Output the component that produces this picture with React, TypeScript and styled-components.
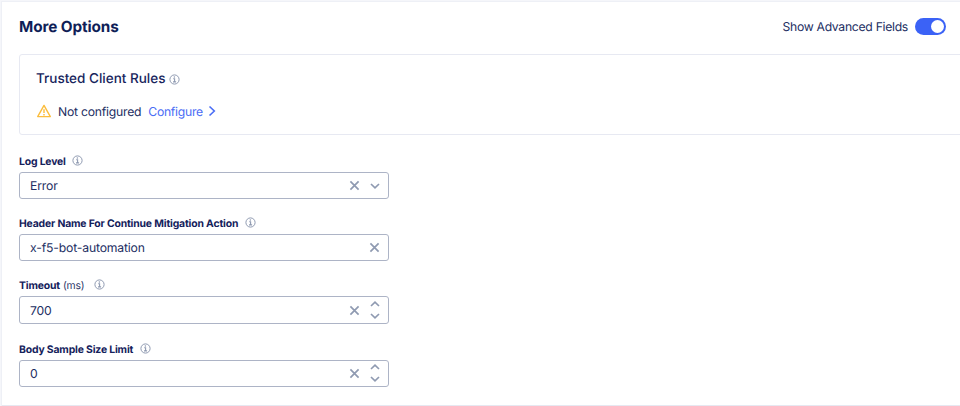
import React from "react";
import styled, { createGlobalStyle } from "styled-components";

const GlobalStyle = createGlobalStyle`
  *, *::before, *::after { box-sizing: border-box; }
  body { margin: 0; background: #f5f6fa; font-family: Inter, "Liberation Sans", sans-serif; color: #222e62; overflow: hidden; text-rendering: geometricPrecision; }
`;

const Page = styled.div`
  height: 406px;
  padding: 2px 0 0 2px;
  overflow: hidden;
`;

const Panel = styled.section`
  height: 404px;
  padding-left: 17px;
  background: #fff;
  border-bottom: 1px solid #e6e8f1;
  box-shadow: 0 0 0 1px #eef0f6;
`;

const Header = styled.header`
  display: flex;
  align-items: center;
  justify-content: space-between;
  height: 50px;
  padding-right: 14.5px;
`;

const Title = styled.h1`
  margin: 0;
  font-size: 15.3px;
  line-height: 20px;
  font-weight: 700;
  letter-spacing: -0.1px;
  color: #0f1e57;
`;

const ToggleLabel = styled.label`
  display: flex;
  align-items: center;
  gap: 7px;
  margin-bottom: 1px;
  font-size: 12.2px;
  letter-spacing: -0.29px;
  white-space: nowrap;
`;

const Switch = styled.button`
  display: flex;
  align-items: center;
  justify-content: flex-end;
  width: 30.5px;
  height: 17px;
  padding: 0 2px;
  border: 0;
  border-radius: 9px;
  background: #3b62f6;
`;

const Knob = styled.span`
  width: 13px;
  height: 13px;
  border-radius: 50%;
  background: #fff;
`;

const Card = styled.section`
  height: 81px;
  margin: 2px -4px 15px 0;
  padding: 14px 17px 0;
  border: 1px solid #e7e9f2;
  border-radius: 3px;
`;

const CardTitle = styled.h2`
  display: flex;
  align-items: center;
  gap: 4px;
  height: 20px;
  margin: 0 0 0 -1px;
  font-size: 13.5px;
  font-weight: 500;
  color: #17245c;
`;

const Status = styled.div`
  display: flex;
  align-items: center;
  height: 20px;
  margin-top: 12px;
  font-size: 12.2px;
  letter-spacing: -0.23px;
`;

const StatusText = styled.span`
  margin: 0 7px;
`;

const ConfigureLink = styled.a`
  display: flex;
  align-items: center;
  gap: 5px;
  letter-spacing: -0.27px;
  color: #4a6df5;
`;

const Fields = styled.div`
  width: 370px;
`;

const Field = styled.div<{ $gap: number }>`
  margin-bottom: ${(p) => p.$gap}px;
`;

const FieldLabel = styled.div`
  display: flex;
  align-items: center;
  height: 22px;
  padding-top: 1px;
  font-size: 10.4px;
  font-weight: 700;
  letter-spacing: -0.16px;
  color: #14215b;
`;

const Unit = styled.span`
  margin: 0 3px 0 3px;
  font-weight: 400;
  color: #2e3969;
`;

const LabelIcon = styled.span`
  display: flex;
  margin: 0 0 2px 6.5px;
`;

const InputBox = styled.div<{ $height: number }>`
  display: flex;
  align-items: center;
  height: ${(p) => p.$height}px;
  padding: 0 8px 0 10px;
  border: 1px solid #adb4c6;
  border-radius: 3px;
  font-size: 12.2px;
  letter-spacing: -0.16px;
`;

const Value = styled.span`
  flex: 1;
`;

const Controls = styled.div<{ $arrows: boolean }>`
  display: flex;
  align-items: center;
  gap: 9.5px;
  padding-right: ${(p) => (p.$arrows ? 0.5 : 0)}px;
`;

const Stepper = styled.div`
  display: flex;
  flex-direction: column;
  gap: 6px;
  margin-bottom: 1px;
`;

const Icon = styled.svg`
  display: block;
  flex: none;
  fill: none;
`;

const InfoIcon = () => (
  <Icon width="11" height="11" viewBox="0 0 11 11" stroke="#8f9ab1">
    <circle cx="5.5" cy="5.5" r="4.6" strokeWidth="1" />
    <path d="M4.2 4.8h1.4v3M4 7.9h3.1" strokeWidth="1.1" />
    <circle cx="5.4" cy="3.1" r="0.75" fill="#8f9ab1" stroke="none" />
  </Icon>
);

const WarningIcon = () => (
  <Icon width="14" height="14" viewBox="0 0 14 14" stroke="#fbbd3d" strokeLinejoin="round">
    <path d="M7 1.4L13.3 12.6H.7z" strokeWidth="1.4" />
    <path d="M7 5.2v3.7M7 10v1.4" strokeWidth="1.4" />
  </Icon>
);

const ClearIcon = () => (
  <Icon width="11" height="11" viewBox="0 0 11 11" stroke="#8f9ab1" strokeWidth="1.7">
    <path d="M1.4 1.4l8.2 8.2M9.6 1.4l-8.2 8.2" />
  </Icon>
);

const Chevron = ({ up = false }: { up?: boolean }) => (
  <Icon width="10" height="6" viewBox="0 0 10 6" stroke="#8f9ab1" strokeWidth="1.7">
    <path d={up ? "M1 5l4-3.8L9 5" : "M1 1l4 3.8L9 1"} />
  </Icon>
);

type FieldData = {
  label: string;
  unit?: string;
  value: string;
  kind: "select" | "text" | "number";
  height: number;
  gap: number;
};

const fields: FieldData[] = [
  { label: "Log Level", value: "Error", kind: "select", height: 27, gap: 13 },
  { label: "Header Name For Continue Mitigation Action", value: "x-f5-bot-automation", kind: "text", height: 27, gap: 13 },
  { label: "Timeout", unit: "(ms)", value: "700", kind: "number", height: 28, gap: 14 },
  { label: "Body Sample Size Limit", value: "0", kind: "number", height: 27, gap: 0 },
];

export default function App() {
  return (
    <Page>
      <GlobalStyle />
      <Panel>
        <Header>
          <Title>More Options</Title>
          <ToggleLabel>
            Show Advanced Fields
            <Switch role="switch" aria-checked="true">
              <Knob />
            </Switch>
          </ToggleLabel>
        </Header>
        <Card>
          <CardTitle>
            Trusted Client Rules
            <InfoIcon />
          </CardTitle>
          <Status>
            <WarningIcon />
            <StatusText>Not configured</StatusText>
            <ConfigureLink>
              Configure
              <Icon width="8" height="12" viewBox="0 0 8 12" stroke="#4a6df5" strokeWidth="1.6">
                <path d="M1.5 1.5L6.3 6l-4.8 4.5" />
              </Icon>
            </ConfigureLink>
          </Status>
        </Card>
        <Fields>
          {fields.map((f) => (
            <Field key={f.label} $gap={f.gap}>
              <FieldLabel>
                {f.label}
                {f.unit && <Unit>{f.unit}</Unit>}
                <LabelIcon>
                  <InfoIcon />
                </LabelIcon>
              </FieldLabel>
              <InputBox $height={f.height}>
                <Value>{f.value}</Value>
                <Controls $arrows={f.kind !== "text"}>
                  <ClearIcon />
                  {f.kind === "select" && <Chevron />}
                  {f.kind === "number" && (
                    <Stepper>
                      <Chevron up />
                      <Chevron />
                    </Stepper>
                  )}
                </Controls>
              </InputBox>
            </Field>
          ))}
        </Fields>
      </Panel>
    </Page>
  );
}
